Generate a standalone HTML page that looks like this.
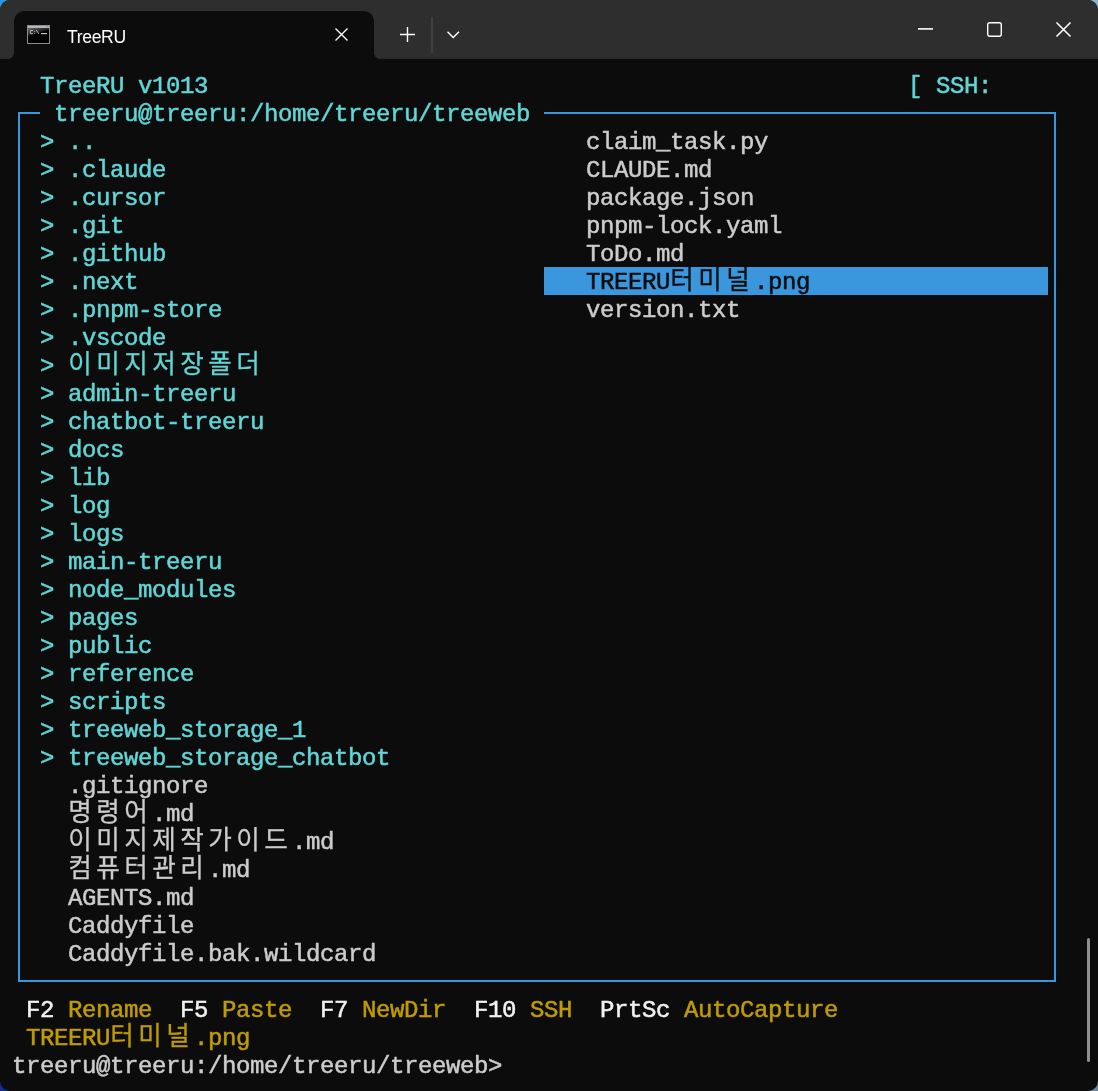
<!DOCTYPE html>
<html><head><meta charset="utf-8"><title>TreeRU</title>
<style>
html,body{margin:0;padding:0;}
body{width:1098px;height:1091px;overflow:hidden;position:relative;background:#0c0c0c;font-family:"Liberation Sans",sans-serif;}
.cn{position:absolute;width:12px;height:12px;}
#win{position:absolute;left:0;top:0;width:1098px;height:1091px;background:#0c0c0c;border-radius:10px;overflow:hidden;will-change:transform;}
#tb{position:absolute;left:0;top:0;width:1098px;height:59px;background:#2e2e2e;box-shadow:inset 0 -2px 0 #2a2a2a;}
#tab{position:absolute;left:14px;top:11px;width:360px;height:48px;background:#0c0c0c;border-radius:10px 10px 0 0;}
#tab:before,#tab:after{content:"";position:absolute;bottom:0;width:6px;height:6px;}
#tab:before{left:-6px;background:radial-gradient(circle at 0 0,#2e2e2e 5.5px,#0c0c0c 6.2px);}
#tab:after{right:-6px;background:radial-gradient(circle at 100% 0,#2e2e2e 5.5px,#0c0c0c 6.2px);}
#title{position:absolute;left:67px;top:26.7px;font-size:17.6px;line-height:20px;color:#fff;letter-spacing:-0.35px;}
.ic{position:absolute;overflow:visible;}
.t{position:absolute;height:28px;line-height:28px;white-space:pre;font-family:"Liberation Mono","Noto Sans CJK KR",monospace;font-size:24px;letter-spacing:-0.4023px;margin-top:1.6px;-webkit-text-stroke:0.5px currentColor;}
.c{color:#61d6d6;}
.w{color:#cccccc;}
.b{color:#f2f2f2;}
.y{color:#c19c00;}
.sel{color:#0c0c0c;}
.k{display:inline-block;width:28px;height:28px;vertical-align:top;position:relative;letter-spacing:0;font-family:"Noto Sans CJK KR","NanumGothic",sans-serif;font-size:25.6px;line-height:18.3px;text-align:left;text-indent:0.3px;-webkit-text-stroke:0.26px currentColor;overflow:visible;}
#hl{position:absolute;left:544px;top:267px;width:504px;height:28px;background:#3a96dd;}
.ln{position:absolute;background:#3a96dd;}
#sb{position:absolute;left:1087px;top:938px;width:3px;height:124px;border-radius:2px;background:#8f8f8f;}
</style></head>
<body>
<div class="cn" style="left:0;top:0;background:#2f97e0"></div>
<div class="cn" style="right:0;top:0;background:#8fb2cc"></div>
<div class="cn" style="left:0;bottom:0;background:#16289a"></div>
<div class="cn" style="right:0;bottom:0;background:#6c8496"></div>
<div id="win">
<div id="tb">
  <div id="tab"></div>
  <svg class="ic" style="left:27px;top:25px" width="23" height="19" viewBox="0 0 23 19">
    <defs><linearGradient id="gl" x1="0" y1="0" x2="0.6" y2="1"><stop offset="0" stop-color="#fff" stop-opacity="0.42"/><stop offset="0.55" stop-color="#fff" stop-opacity="0.10"/><stop offset="0.6" stop-color="#fff" stop-opacity="0"/></linearGradient></defs>
    <rect x="0.5" y="0.5" width="22" height="18" fill="#000" stroke="#8e8e8e"/>
    <rect x="1" y="3" width="21" height="10" fill="url(#gl)"/>
    <rect x="1" y="1" width="21" height="2" fill="#b4b6ba"/>
    <rect x="19" y="1" width="2" height="1" fill="#6f9be0"/>
    <path d="M6 5.5h-2.6v3.2h2.6" stroke="#c4c4c4" fill="none" stroke-width="0.9"/>
    <path d="M7.6 6.2v0.9M7.6 7.9v0.9" stroke="#c4c4c4" stroke-width="0.9"/>
    <path d="M9.3 5l2.6 4" stroke="#c4c4c4" stroke-width="0.9"/>
    <path d="M14 8.7h6" stroke="#e8e8e8" stroke-width="1"/>
  </svg>
  <div id="title">TreeRU</div>
  <svg class="ic" style="left:335px;top:28px" width="13" height="13" viewBox="0 0 13 13"><path d="M0.5 0.5L12.5 12.5M12.5 0.5L0.5 12.5" stroke="#fff" stroke-width="1.4" fill="none"/></svg>
  <svg class="ic" style="left:400px;top:27px" width="15" height="15" viewBox="0 0 15 15"><path d="M7.5 0v15M0 7.5h15" stroke="#fff" stroke-width="1.4" fill="none"/></svg>
  <div style="position:absolute;left:431px;top:17px;width:2px;height:36px;background:#3f3f3f"></div>
  <svg class="ic" style="left:447px;top:31px" width="13" height="8" viewBox="0 0 13 8"><path d="M0.5 0.8L6.2 6.6L12 0.8" stroke="#fff" stroke-width="1.4" fill="none"/></svg>
  <svg class="ic" style="left:918px;top:28px" width="15" height="2" viewBox="0 0 15 2"><path d="M0 0.9h15" stroke="#fff" stroke-width="1.6"/></svg>
  <svg class="ic" style="left:987px;top:22px" width="15" height="15" viewBox="0 0 15 15"><rect x="0.7" y="0.7" width="13.6" height="13.6" rx="2" fill="none" stroke="#fff" stroke-width="1.4"/></svg>
  <svg class="ic" style="left:1056px;top:22px" width="15" height="15" viewBox="0 0 15 15"><path d="M0.5 0.5L14.5 14.5M14.5 0.5L0.5 14.5" stroke="#fff" stroke-width="1.55" fill="none"/></svg>
</div>
<div id="hl"></div>
<div class="ln" style="left:18px;top:112px;width:22px;height:2px"></div>
<div class="ln" style="left:544px;top:112px;width:512px;height:2px"></div>
<div class="ln" style="left:18px;top:112px;width:2px;height:870px"></div>
<div class="ln" style="left:1054px;top:112px;width:2px;height:870px"></div>
<div class="ln" style="left:18px;top:980px;width:1038px;height:2px"></div>
<div class="t c" style="left:40px;top:71px">TreeRU v1013</div>
<div class="t c" style="left:908px;top:71px">[ SSH:</div>
<div class="t c" style="left:54px;top:99px">treeru@treeru:/home/treeru/treeweb</div>
<div class="t c" style="left:40px;top:127px">&gt; ..</div>
<div class="t w" style="left:586px;top:127px">claim_task.py</div>
<div class="t c" style="left:40px;top:155px">&gt; .claude</div>
<div class="t w" style="left:586px;top:155px">CLAUDE.md</div>
<div class="t c" style="left:40px;top:183px">&gt; .cursor</div>
<div class="t w" style="left:586px;top:183px">package.json</div>
<div class="t c" style="left:40px;top:211px">&gt; .git</div>
<div class="t w" style="left:586px;top:211px">pnpm-lock.yaml</div>
<div class="t c" style="left:40px;top:239px">&gt; .github</div>
<div class="t w" style="left:586px;top:239px">ToDo.md</div>
<div class="t c" style="left:40px;top:267px">&gt; .next</div>
<div class="t sel" style="left:586px;top:267px">TREERU<span class="k">터</span><span class="k">미</span><span class="k">널</span>.png</div>
<div class="t c" style="left:40px;top:295px">&gt; .pnpm-store</div>
<div class="t w" style="left:586px;top:295px">version.txt</div>
<div class="t c" style="left:40px;top:323px">&gt; .vscode</div>
<div class="t c" style="left:40px;top:351px">&gt; <span class="k">이</span><span class="k">미</span><span class="k">지</span><span class="k">저</span><span class="k">장</span><span class="k">폴</span><span class="k">더</span></div>
<div class="t c" style="left:40px;top:379px">&gt; admin-treeru</div>
<div class="t c" style="left:40px;top:407px">&gt; chatbot-treeru</div>
<div class="t c" style="left:40px;top:435px">&gt; docs</div>
<div class="t c" style="left:40px;top:463px">&gt; lib</div>
<div class="t c" style="left:40px;top:491px">&gt; log</div>
<div class="t c" style="left:40px;top:519px">&gt; logs</div>
<div class="t c" style="left:40px;top:547px">&gt; main-treeru</div>
<div class="t c" style="left:40px;top:575px">&gt; node_modules</div>
<div class="t c" style="left:40px;top:603px">&gt; pages</div>
<div class="t c" style="left:40px;top:631px">&gt; public</div>
<div class="t c" style="left:40px;top:659px">&gt; reference</div>
<div class="t c" style="left:40px;top:687px">&gt; scripts</div>
<div class="t c" style="left:40px;top:715px">&gt; treeweb_storage_1</div>
<div class="t c" style="left:40px;top:743px">&gt; treeweb_storage_chatbot</div>
<div class="t w" style="left:68px;top:771px">.gitignore</div>
<div class="t w" style="left:68px;top:799px"><span class="k">명</span><span class="k">령</span><span class="k">어</span>.md</div>
<div class="t w" style="left:68px;top:827px"><span class="k">이</span><span class="k">미</span><span class="k">지</span><span class="k">제</span><span class="k">작</span><span class="k">가</span><span class="k">이</span><span class="k">드</span>.md</div>
<div class="t w" style="left:68px;top:855px"><span class="k">컴</span><span class="k">퓨</span><span class="k">터</span><span class="k">관</span><span class="k">리</span>.md</div>
<div class="t w" style="left:68px;top:883px">AGENTS.md</div>
<div class="t w" style="left:68px;top:911px">Caddyfile</div>
<div class="t w" style="left:68px;top:939px">Caddyfile.bak.wildcard</div>
<div class="t b" style="left:26px;top:995px">F2</div>
<div class="t y" style="left:68px;top:995px">Rename</div>
<div class="t b" style="left:180px;top:995px">F5</div>
<div class="t y" style="left:222px;top:995px">Paste</div>
<div class="t b" style="left:320px;top:995px">F7</div>
<div class="t y" style="left:362px;top:995px">NewDir</div>
<div class="t b" style="left:474px;top:995px">F10</div>
<div class="t y" style="left:530px;top:995px">SSH</div>
<div class="t b" style="left:600px;top:995px">PrtSc</div>
<div class="t y" style="left:684px;top:995px">AutoCapture</div>
<div class="t y" style="left:26px;top:1023px">TREERU<span class="k">터</span><span class="k">미</span><span class="k">널</span>.png</div>
<div class="t w" style="left:12px;top:1051px">treeru@treeru:/home/treeru/treeweb&gt;</div>
<div id="sb"></div>
</div>
</body></html>
